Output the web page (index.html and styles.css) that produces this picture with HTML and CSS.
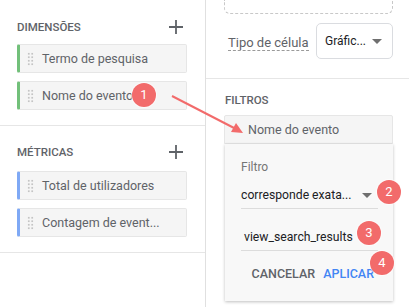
FILE: index.html
```html
<!DOCTYPE html>
<html lang="pt">
<head>
    <meta charset="UTF-8">
    <meta name="viewport" content="width=device-width, initial-scale=1.0">
    <title>Filtros</title>
    <link rel="stylesheet" href="styles.css">
</head>
<body>
    <div class="editor">
        <div class="left">
            <div class="section">
                <div class="section-head">
                    <span>DIMENSÕES</span>
                    <svg class="plus" width="14" height="14" viewBox="0 0 14 14"><path d="M7 0v14M0 7h14" stroke="#5f6368" stroke-width="1.8"/></svg>
                </div>
                <div class="chip green"><span class="grip"></span>Termo de pesquisa</div>
                <div class="chip green"><span class="grip"></span>Nome do evento</div>
            </div>
            <div class="section">
                <div class="section-head">
                    <span>MÉTRICAS</span>
                    <svg class="plus" width="14" height="14" viewBox="0 0 14 14"><path d="M7 0v14M0 7h14" stroke="#5f6368" stroke-width="1.8"/></svg>
                </div>
                <div class="chip blue"><span class="grip"></span>Total de utilizadores</div>
                <div class="chip blue"><span class="grip"></span>Contagem de event...</div>
            </div>
        </div>
        <div class="right">
            <div class="dashed-box"></div>
            <div class="cell-row">
                <span class="cell-label">Tipo de célula</span>
                <div class="cell-select">
                    <span>Gráfic...</span>
                    <span class="caret"></span>
                </div>
            </div>
            <div class="filters">
                <div class="section-head">FILTROS</div>
                <div class="filter-chip">Nome do evento</div>
                <div class="popup">
                    <div class="popup-label">Filtro</div>
                    <div class="field">
                        <span>corresponde exata...</span>
                        <span class="caret"></span>
                    </div>
                    <div class="field">
                        <span class="value">view_search_results</span>
                    </div>
                    <div class="actions">
                        <span class="btn">CANCELAR</span>
                        <span class="btn primary">APLICAR</span>
                    </div>
                </div>
            </div>
        </div>
    </div>

    <svg class="arrow" width="409" height="307" viewBox="0 0 409 307">
        <line x1="172" y1="96" x2="236" y2="129" stroke="#f26b6b" stroke-width="2"/>
        <path d="M243 133 L231 132 L236 123 Z" fill="#f26b6b"/>
    </svg>
    <span class="badge" style="left:132px;top:83px">1</span>
    <span class="badge" style="left:377px;top:180px">2</span>
    <span class="badge" style="left:357px;top:221px">3</span>
    <span class="badge" style="left:370px;top:251px">4</span>
</body>
</html>
```

FILE: styles.css
```css
body {
    margin: 0;
    background: #fff;
    font-family: Roboto, "Liberation Sans", sans-serif;
    color: #5f6368;
    overflow: hidden;
}
.editor {
    display: flex;
    height: 307px;
}
.left {
    width: 205px;
    border-right: 1px solid #e0e0e0;
}
.section {
    padding: 18px 18px 15px 17px;
    border-bottom: 1px solid #e6e6e6;
}
.section + .section {
    padding-top: 17px;
}
.section-head {
    display: flex;
    justify-content: space-between;
    align-items: center;
    height: 18px;
    font-size: 11.5px;
    font-weight: 500;
    color: #5f6368;
    margin-bottom: 8px;
}
.section + .section .section-head {
    margin-bottom: 10px;
}
.plus {
    margin-right: 4px;
}
.chip {
    display: flex;
    align-items: center;
    height: 27px;
    background: #f5f5f5;
    border: 1px solid #e6e6e6;
    border-left-width: 3px;
    border-radius: 2px;
    font-size: 12.5px;
    color: #5f6368;
    margin-bottom: 8px;
}
.chip:last-child {
    margin-bottom: 0;
}
.chip.green {
    border-left-color: #72c07a;
}
.chip.blue {
    border-left-color: #7fa9f5;
}
.grip {
    width: 7px;
    height: 14px;
    margin: 0 8px 0 7px;
    background-image: radial-gradient(circle, #c4c4c4 1px, transparent 1.2px);
    background-size: 3.5px 3.5px;
}
.right {
    flex: 1;
    padding: 0 16px 0 0;
}
.dashed-box {
    height: 13px;
    margin-left: 18px;
    border: 1px dashed #c8c8c8;
    border-top: none;
    border-radius: 0 0 6px 6px;
}
.cell-row {
    display: flex;
    align-items: center;
    justify-content: space-between;
    margin: 9px 0 0 18px;
    padding-bottom: 19px;
}
.cell-label {
    font-size: 13px;
    color: #5f6368;
    padding-top: 4px;
    border-bottom: 1px dashed #9a9a9a;
    line-height: 15px;
    margin-left: 4px;
}
.cell-select {
    display: flex;
    align-items: center;
    justify-content: space-between;
    width: 77px;
    height: 36px;
    padding: 0 10px 0 8px;
    box-sizing: border-box;
    border: 1px solid #dadce0;
    border-radius: 5px;
    font-size: 12px;
    color: #202124;
}
.caret {
    width: 0;
    height: 0;
    border-left: 5px solid transparent;
    border-right: 5px solid transparent;
    border-top: 5px solid #6f6f6f;
}
.filters {
    border-top: 1px solid #e6e6e6;
    margin-right: -16px;
    padding: 12px 16px 0 18px;
}
.filters .section-head {
    margin-bottom: 6px;
    padding-left: 1px;
}
.filter-chip {
    height: 27px;
    line-height: 27px;
    background: #f5f5f5;
    border: 1px solid #e6e6e6;
    border-radius: 2px 2px 0 0;
    padding-left: 23px;
    font-size: 12.5px;
    color: #5f6368;
}
.popup {
    margin-left: 1px;
    height: 157px;
    background: #f8f8f8;
    box-shadow: 0 1px 3px rgba(0, 0, 0, 0.25);
    padding: 16px 15px 0 16px;
    box-sizing: border-box;
}
.popup-label {
    font-size: 12px;
    line-height: 15px;
    color: #757575;
    margin-bottom: 7px;
}
.field {
    display: flex;
    align-items: center;
    justify-content: space-between;
    height: 26px;
    border-bottom: 1px solid #dcdcdc;
    font-size: 12.2px;
    color: #202124;
    padding-right: 6px;
    margin-bottom: 15px;
}
.field .value {
    padding-left: 3px;
}
.actions {
    display: flex;
    justify-content: flex-end;
    gap: 8px;
    padding-right: 4px;
    margin-top: 7px;
    font-size: 12.5px;
    line-height: 15px;
    font-weight: 500;
}
.btn {
    color: #5f6368;
}
.btn.primary {
    color: #4285f4;
}
.arrow {
    position: absolute;
    left: 0;
    top: 0;
    pointer-events: none;
}
.badge {
    position: absolute;
    width: 24px;
    height: 24px;
    border-radius: 50%;
    background: #f26b6b;
    color: #fff;
    font-size: 13px;
    text-align: center;
    line-height: 24px;
    box-shadow: 0 0 0 1px rgba(255, 255, 255, 0.6);
}
```
